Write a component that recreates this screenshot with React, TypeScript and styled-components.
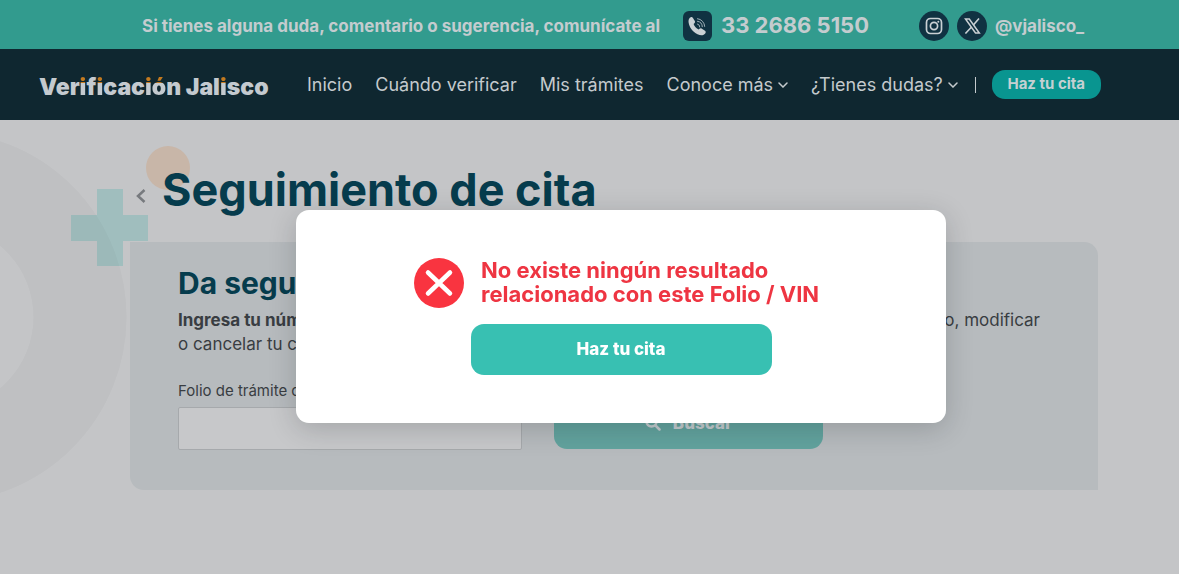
import React from "react";
import styled, { createGlobalStyle } from "styled-components";

const Global = createGlobalStyle`
  * { box-sizing: border-box; }
  body { margin: 0; background: #c4c5c7; font-family: Inter, "Liberation Sans", sans-serif; color: #393d42; }
  h1, h2, p { margin: 0; }
  button { font-family: inherit; border: 0; cursor: pointer; }
  a { color: inherit; text-decoration: none; }
`;

const Page = styled.div`
  position: relative;
  min-height: 100vh;
  overflow: hidden;
`;

const TopBar = styled.div`
  display: flex;
  align-items: center;
  height: 49px;
  padding: 2px 24px 0 142px;
  background: #329b8e;
  color: #c4cccf;
  font-size: 17px;
  font-weight: 700;
  white-space: nowrap;
`;

const Notice = styled.span`
  min-width: 533px;
`;

const PhoneLink = styled.a`
  display: flex;
  align-items: center;
  gap: 9px;
  min-width: 187px;
  margin-left: 8px;
  font-size: 22px;
  line-height: 26px;

  span {
    padding-bottom: 2px;
  }
`;

const Social = styled.div`
  display: flex;
  align-items: center;
  gap: 8px;
  margin-left: 49px;
`;

const RoundLink = styled.a`
  display: grid;
  place-items: center;
  width: 30px;
  height: 30px;
  border-radius: 50%;
  background: #103242;
`;

const NavBar = styled.header`
  display: flex;
  align-items: center;
  height: 71px;
  padding: 0 24px 0 39px;
  background: #0f2730;
  color: #c4cacd;
  white-space: nowrap;
`;

const Logo = styled.a`
  width: 232px;
  margin-right: 36px;
  padding-top: 4px;
  color: #c4cacf;
  font-size: 23px;
  font-weight: 900;
  line-height: 26px;
`;

const Accent = styled.span`
  background: linear-gradient(#c47a1f 10px, #c4cacf 10px);
  background-clip: text;
  -webkit-background-clip: text;
  color: transparent;
`;

const Menu = styled.nav`
  display: flex;
  align-items: center;
  gap: 23px;
  font-size: 18px;
`;

const MenuLink = styled.a`
  display: flex;
  align-items: center;
  gap: 5px;
`;

const Divider = styled.span`
  width: 1px;
  height: 16px;
  margin: 0 16px 0 17px;
  background: #c4cacd;
`;

const Pill = styled.button`
  width: 109px;
  height: 29px;
  padding: 0 0 2px;
  border-radius: 13px;
  background: #099590;
  color: #c4d0d2;
  font-size: 15px;
  font-weight: 700;
`;

const Shapes = styled.svg`
  position: absolute;
  top: 120px;
  left: 0;
`;

const Main = styled.main`
  position: relative;
  margin: 0 81px 0 130px;
  padding-top: 44px;
`;

const TitleRow = styled.div`
  display: flex;
  align-items: center;
  gap: 16px;
  height: 52px;
  padding-left: 6px;
`;

const Back = styled.button`
  display: flex;
  padding: 12px 0 0;
  background: none;
  color: #777a7e;
`;

const Title = styled.h1`
  color: #063c4d;
  font-size: 45px;
  line-height: 52px;
  font-weight: 700;
  white-space: nowrap;
`;

const Card = styled.section`
  margin-top: 26px;
  min-height: 248px;
  padding: 24px 58px 0 48px;
  border-radius: 0 14px 0 14px;
  background: #b7bbbe;
`;

const CardTitle = styled.h2`
  color: #063c4d;
  font-size: 30px;
  line-height: 34px;
  font-weight: 700;
`;

const Copy = styled.p`
  margin-top: 8px;
  font-size: 17px;
  line-height: 24px;
`;

const CopyLine = styled.span`
  display: flex;
  justify-content: space-between;
  white-space: nowrap;
`;

const Form = styled.form`
  display: flex;
  align-items: flex-end;
  gap: 32px;
  margin-top: 25px;
`;

const Field = styled.label`
  display: flex;
  flex-direction: column;
  gap: 6px;
  width: 344px;
  font-size: 15px;
  line-height: 20px;
`;

const TextBox = styled.input`
  width: 100%;
  height: 43px;
  padding: 0 12px;
  border: 1px solid #a6a9ac;
  border-radius: 2px;
  background: #c7c8ca;
  font: inherit;
  outline: none;
`;

const Action = styled.button<{ $muted?: boolean }>`
  display: flex;
  align-items: center;
  justify-content: center;
  gap: 12px;
  width: ${(p) => (p.$muted ? 269 : 301)}px;
  height: 51px;
  margin-bottom: ${(p) => (p.$muted ? 1 : 0)}px;
  padding: 0 0 2px;
  border-radius: 13px;
  background: ${(p) => (p.$muted ? "#62a39e" : "#38c0b2")};
  color: ${(p) => (p.$muted ? "#c4cccf" : "#ffffff")};
  font-size: 17px;
  font-weight: 800;
`;

const Overlay = styled.div`
  position: fixed;
  inset: 0;
  display: flex;
  justify-content: center;
  align-items: flex-start;
  padding: 210px 0 0 63px;
`;

const Dialog = styled.div`
  display: flex;
  flex-direction: column;
  align-items: center;
  gap: 16px;
  width: 650px;
  padding: 48px;
  border-radius: 13px;
  background: #fff;
  box-shadow: 0 6px 28px rgba(20, 25, 30, 0.2);
`;

const Message = styled.div`
  display: flex;
  align-items: center;
  gap: 17px;
  color: #ee3542;
  font-size: 22px;
  line-height: 24px;
  font-weight: 700;
  white-space: nowrap;

  p {
    min-width: 347px;
    padding-bottom: 2px;
  }
`;

const Chevron = () => (
  <svg width="10" height="6" viewBox="0 0 10 6" fill="none" stroke="currentColor" strokeWidth="1.5" strokeLinecap="round" aria-hidden="true">
    <path d="M1 1l4 4 4-4" />
  </svg>
);

const PhoneIcon = () => (
  <svg width="29" height="30" viewBox="0 0 29 30" fill="none" aria-hidden="true">
    <rect width="29" height="30" rx="6" fill="#103242" />
    <path d="M6.3 7.5C7.4 6 9 5.500 9.800 6.800l2 3.200c.6 1.100.2 1.900-1.200 3 .9 2.600 2.600 4.400 5.100 5.500 1.200-1.200 2.100-1.500 3.200-.8l3.100 2c1.200.8.9 2.100-.3 3.300-1.800 1.800-4.400 1.500-7.200.2C9.600 20.900 6.300 16.500 5.600 11.500c-.2-1.600 0-2.900.7-4z" fill="#c9d0d4" />
    <path d="M14.500 13a3 3 0 0 1 2.300 3M14.500 10.300a5.500 5.500 0 0 1 4.800 5.400M14.500 7.700a8 8 0 0 1 7.200 7.700" stroke="#9fb0b8" strokeWidth="1" strokeLinecap="round" />
  </svg>
);

const InstagramIcon = () => (
  <svg width="18" height="18" viewBox="0 0 18 18" fill="none" stroke="#c9d0d4" strokeWidth="1.700" aria-hidden="true">
    <rect x="1.500" y="1.500" width="15" height="15" rx="4" />
    <circle cx="9" cy="9" r="3.600" />
    <circle cx="13.300" cy="4.700" r="1" fill="#c9d0d4" stroke="none" />
  </svg>
);

const XIcon = () => (
  <svg width="17" height="16" viewBox="0 0 17 16" fill="none" stroke="#c9d0d4" aria-hidden="true">
    <path d="M1.500 1h3.800l10 14h-3.800z" strokeWidth="1.500" />
    <path d="M15 .5L9.600 6.700M7.300 9.300L1.400 15.500" strokeWidth="1.600" />
  </svg>
);

const SearchIcon = () => (
  <svg width="16" height="16" viewBox="0 0 16 16" fill="none" stroke="currentColor" strokeWidth="2.500" strokeLinecap="round" aria-hidden="true">
    <circle cx="6.500" cy="6.500" r="5" />
    <path d="M10.500 10.500L14.500 14.500" />
  </svg>
);

const ErrorIcon = () => (
  <svg width="50" height="50" viewBox="0 0 50 50" aria-hidden="true">
    <circle cx="25" cy="25" r="25" fill="#f93440" />
    <path d="M14 14.500L36 35.500M36 14.500L14 35.500" stroke="#fff" strokeWidth="4.500" strokeLinecap="round" />
  </svg>
);

export default function App() {
  return (
    <Page>
      <Global />
      <TopBar>
        <Notice>Si tienes alguna duda, comentario o sugerencia, comunícate al</Notice>
        <PhoneLink href="tel:3326865150">
          <PhoneIcon />
          <span>33 2686 5150</span>
        </PhoneLink>
        <Social>
          <RoundLink href="#instagram" aria-label="Instagram"><InstagramIcon /></RoundLink>
          <RoundLink href="#x" aria-label="X"><XIcon /></RoundLink>
          <span>@vjalisco_</span>
        </Social>
      </TopBar>
      <NavBar>
        <Logo href="#inicio">
          Ver<Accent>i</Accent>f<Accent>i</Accent>cac<Accent>ió</Accent>n Jal<Accent>i</Accent>sco
        </Logo>
        <Menu>
          <MenuLink href="#inicio">Inicio</MenuLink>
          <MenuLink href="#cuando">Cuándo verificar</MenuLink>
          <MenuLink href="#tramites">Mis trámites</MenuLink>
          <MenuLink href="#conoce">Conoce más <Chevron /></MenuLink>
          <MenuLink href="#dudas">¿Tienes dudas? <Chevron /></MenuLink>
        </Menu>
        <Divider />
        <Pill type="button">Haz tu cita</Pill>
      </NavBar>
      <Shapes width="200" height="400" viewBox="0 120 200 400" aria-hidden="true">
        <path d="M97 189h26v26h25v26h-25v25H97v-25H71v-26h26z" fill="#a0bebe" />
        <circle cx="168" cy="168" r="22" fill="#c8b6a8" />
        <circle cx="-59" cy="317" r="139" fill="none" stroke="#202020" strokeOpacity="0.028" strokeWidth="93" />
      </Shapes>
      <Main>
        <TitleRow>
          <Back type="button" aria-label="Regresar">
            <svg width="10" height="14" viewBox="0 0 10 14" fill="none" stroke="currentColor" strokeWidth="2.500" aria-hidden="true">
              <path d="M8.500 1L2 7l6.500 6" />
            </svg>
          </Back>
          <Title>Seguimiento de cita</Title>
        </TitleRow>
        <Card>
          <CardTitle>Da seguimiento a tu cita</CardTitle>
          <Copy>
            <CopyLine>
              <b>Ingresa tu número de folio o VIN</b>
              <span>para consultar el estado de tu trámite, confirmarlo, modificar</span>
            </CopyLine>
            o cancelar tu cita.
          </Copy>
          <Form onSubmit={(e) => e.preventDefault()}>
            <Field>
              Folio de trámite o VIN
              <TextBox type="text" />
            </Field>
            <Action type="submit" $muted><SearchIcon />Buscar</Action>
          </Form>
        </Card>
      </Main>
      <Overlay>
        <Dialog role="alertdialog" aria-modal="true" aria-labelledby="mensaje">
          <Message>
            <ErrorIcon />
            <p id="mensaje">No existe ningún resultado<br />relacionado con este Folio / VIN</p>
          </Message>
          <Action type="button">Haz tu cita</Action>
        </Dialog>
      </Overlay>
    </Page>
  );
}
